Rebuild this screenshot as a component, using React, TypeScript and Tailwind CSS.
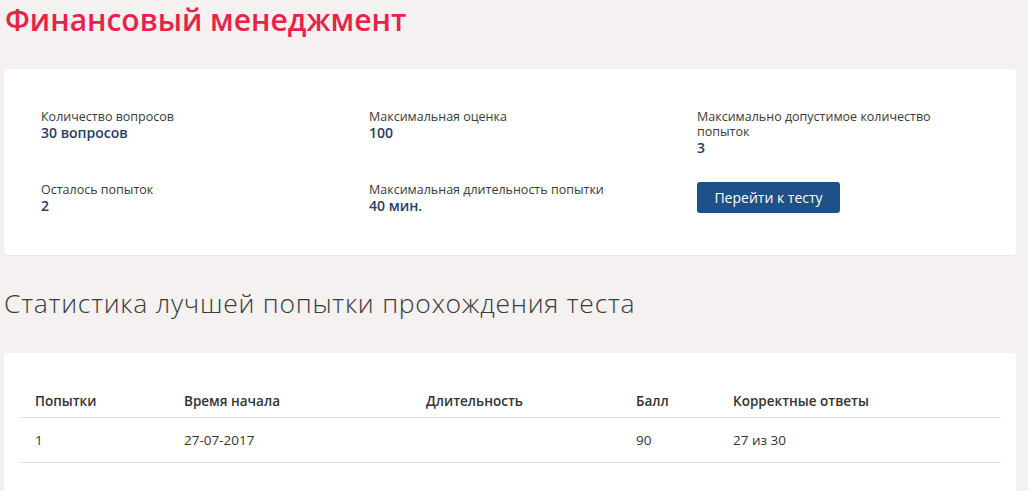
const body = { fontFamily: '"Open Sans", "Noto Sans", "Liberation Sans", sans-serif' };

interface InfoItem {
  label: string;
  value: string;
}

function Info({ label, value }: InfoItem) {
  return (
    <div>
      <div className="text-[12.5px] leading-[15px] text-[#3a3a3a] max-w-[240px]">{label}</div>
      <div className="text-[14px] leading-[18px] font-semibold text-[#263e63]">{value}</div>
    </div>
  );
}

const rows = [{ n: "1", start: "27-07-2017", dur: "", score: "90", correct: "27 из 30" }];

export default function App() {
  return (
    <div className="min-h-screen bg-[#f4f1f0] overflow-hidden" style={body}>
      <h1 className="pl-[5px] pt-[1px] text-[30px] leading-[38px] font-semibold text-[#e8234a]">
        Финансовый менеджмент
      </h1>

      {/* Test summary */}
      <div className="mt-[30px] ml-[4px] w-[1012px] bg-white rounded-[4px] shadow-[0_1px_2px_rgba(0,0,0,0.06)] pl-[37px] pt-[40px] pb-[40px]">
        <div className="grid grid-cols-[328px_328px_1fr] gap-y-[25px]">
          <Info label="Количество вопросов" value="30 вопросов" />
          <Info label="Максимальная оценка" value="100" />
          <Info label="Максимально допустимое количество попыток" value="3" />
          <Info label="Осталось попыток" value="2" />
          <Info label="Максимальная длительность попытки" value="40 мин." />
          <div>
            <button className="h-[31px] w-[143px] rounded-[3px] bg-[#1d5187] text-white text-[14px]">
              Перейти к тесту
            </button>
          </div>
        </div>
      </div>

      <h2 className="mt-[32px] pl-[4px] text-[26.5px] leading-[32px] font-light tracking-[0.75px] text-[#3a3a3a]">
        Статистика лучшей попытки прохождения теста
      </h2>

      {/* Best attempt */}
      <div className="mt-[34px] ml-[4px] w-[1012px] bg-white rounded-[4px] shadow-[0_1px_2px_rgba(0,0,0,0.06)] px-[16px] pt-[32px] pb-[40px]">
        <table className="w-[981px] text-left text-[13.5px] text-[#333] border-collapse">
          <thead>
            <tr className="border-b border-[#e2e2e2]">
              <th className="w-[149px] pl-[15px] py-[6px] leading-[20px] font-semibold">Попытки</th>
              <th className="w-[242px] pl-[15px] py-[6px] leading-[20px] font-semibold">Время начала</th>
              <th className="w-[210px] pl-[15px] py-[6px] leading-[20px] font-semibold">Длительность</th>
              <th className="w-[97px] pl-[15px] py-[6px] leading-[20px] font-semibold">Балл</th>
              <th className="pl-[15px] py-[6px] leading-[20px] font-semibold">Корректные ответы</th>
            </tr>
          </thead>
          <tbody>
            {rows.map((r) => (
              <tr key={r.n} className="border-b border-[#e2e2e2]">
                <td className="pl-[15px] py-[12px] leading-[20px]">{r.n}</td>
                <td className="pl-[15px] py-[12px] leading-[20px]">{r.start}</td>
                <td className="pl-[15px] py-[12px] leading-[20px]">{r.dur}</td>
                <td className="pl-[15px] py-[12px] leading-[20px]">{r.score}</td>
                <td className="pl-[15px] py-[12px] leading-[20px]">{r.correct}</td>
              </tr>
            ))}
          </tbody>
        </table>
      </div>
    </div>
  );
}
